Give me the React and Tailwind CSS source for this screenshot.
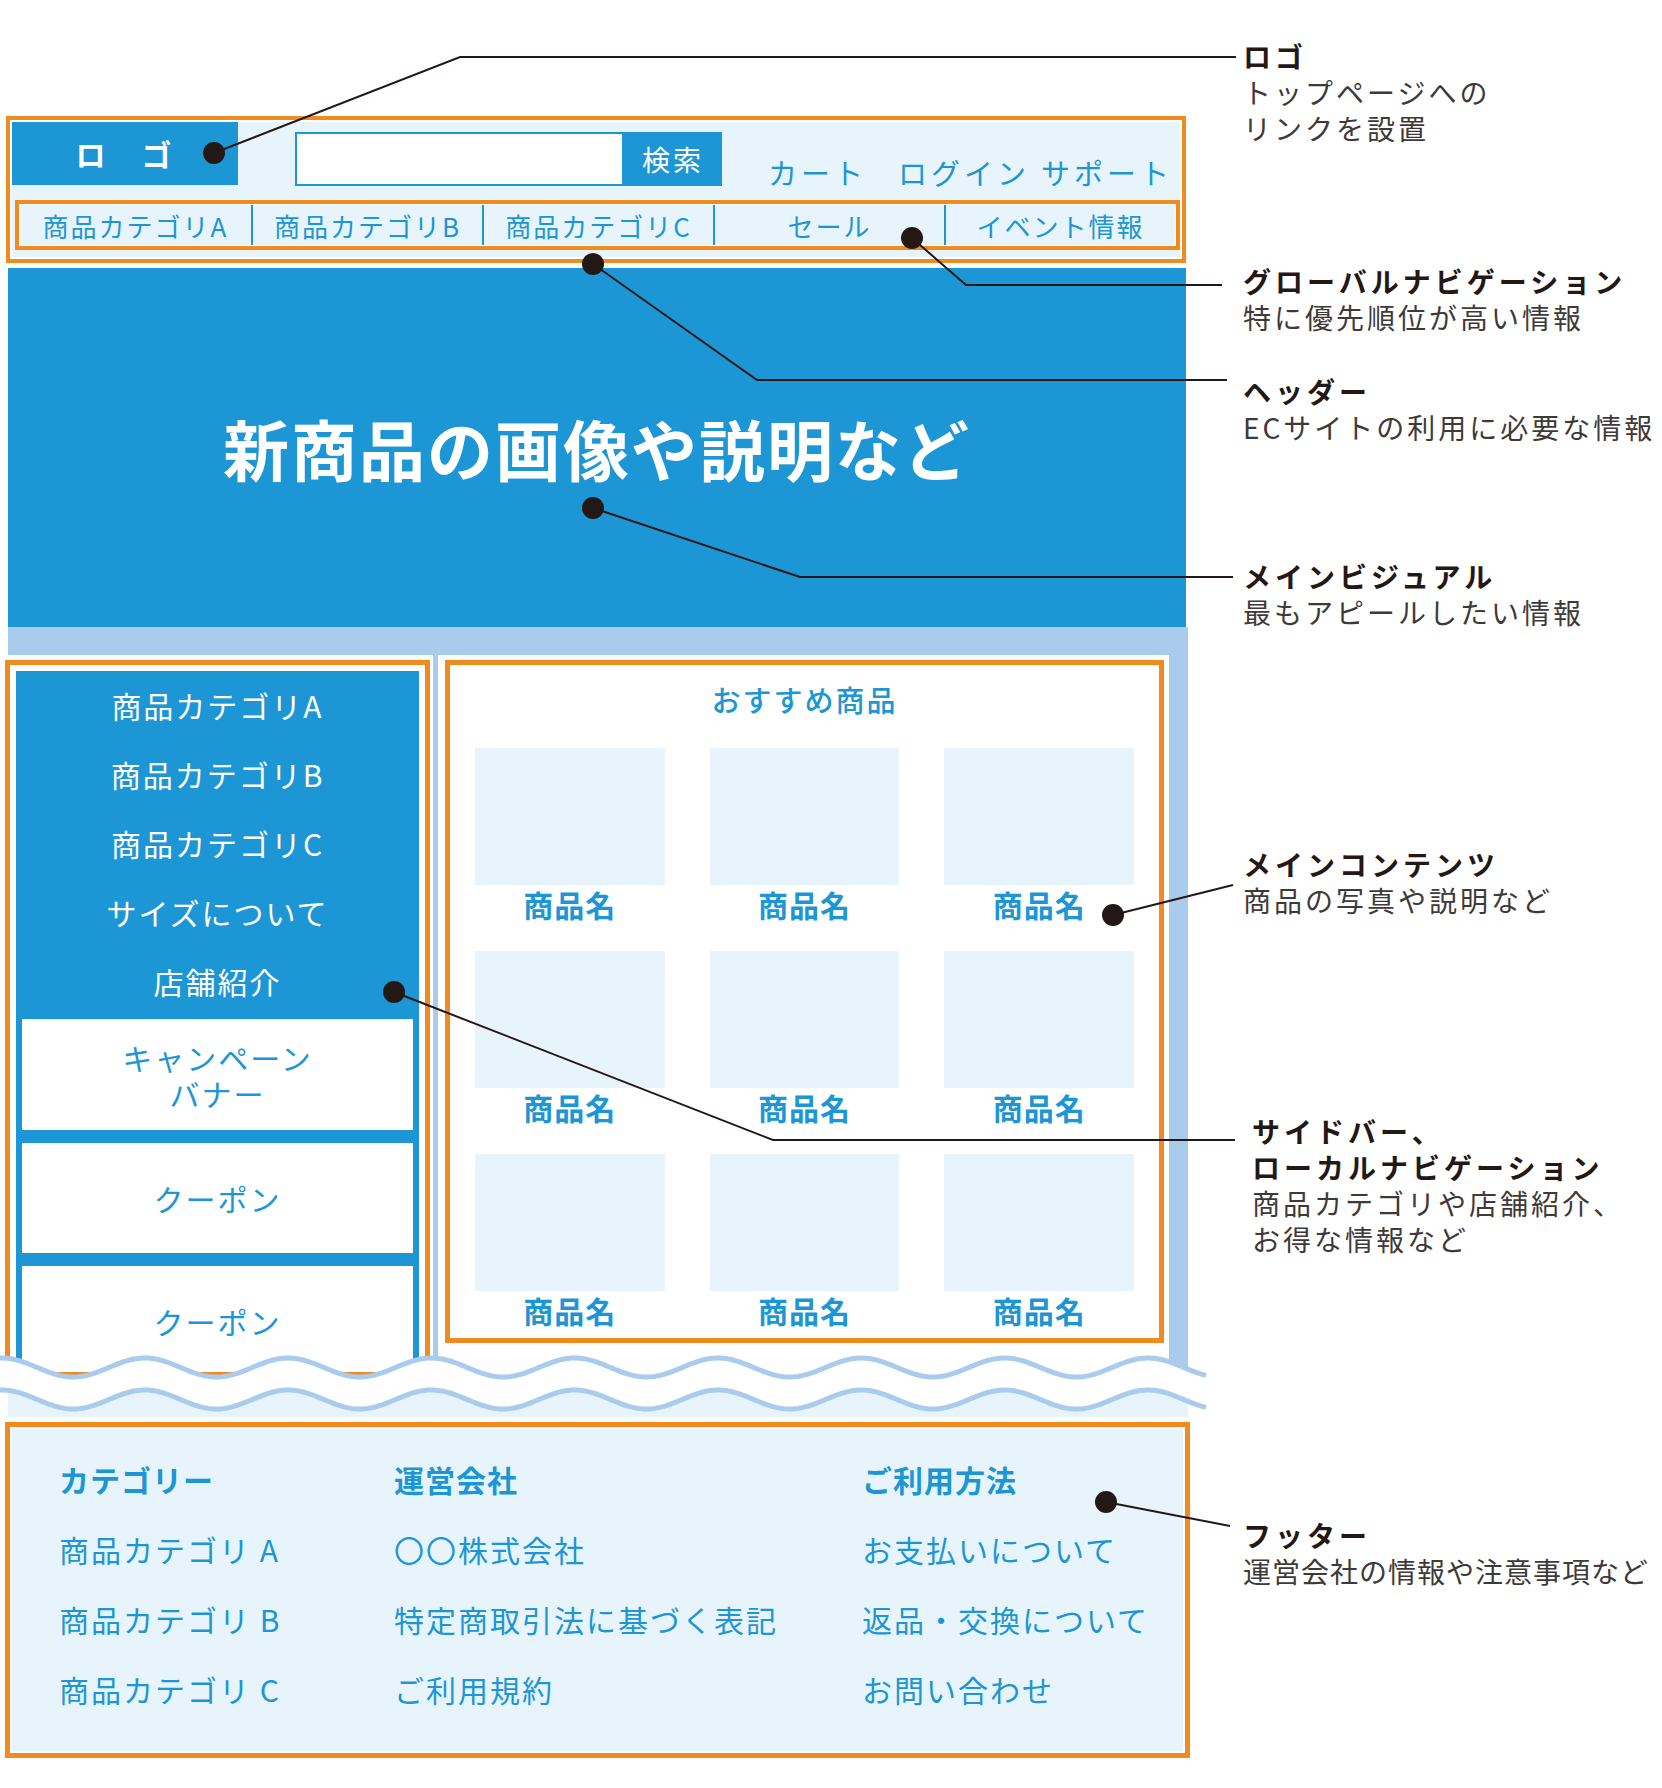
import React from 'react'

const navItems = ['商品カテゴリA', '商品カテゴリB', '商品カテゴリC', 'セール', 'イベント情報']
const sideItems = ['商品カテゴリA', '商品カテゴリB', '商品カテゴリC', 'サイズについて', '店舗紹介']

// builds a cosine wave polyline for the torn edge
function wavePoints(y0, x0, x1) {
    const period = 143.3
    const phase = 1.5
    const amp = 9.5
    let d = ''
    for (let x = x0; x <= x1; x += 2) {
        const y = y0 - amp * Math.cos((2 * Math.PI * (x - phase)) / period)
        d += (x === x0 ? 'M' : 'L') + x + ' ' + y.toFixed(2) + ' '
    }
    const yEnd = y0 - amp * Math.cos((2 * Math.PI * (x1 - phase)) / period)
    d += 'L' + x1 + ' ' + yEnd.toFixed(2) + ' '
    return d
}

function Header() {
    return (
        <div className="mt-[116px] ml-[6px] w-[1180px] h-[147px] border-4 border-[#f08c1f] bg-white p-[2px]">
            <div className="h-full bg-[#e8f4fc] flex flex-col">
                <div className="flex items-start h-[63px]">
                    <div className="w-[226px] h-[63px] bg-[#1c96d4] flex items-center justify-center text-white font-bold text-[30px] tracking-[3px]">
                        ロ　ゴ
                    </div>
                    <div className="ml-[57px] mt-[10px] flex">
                        <div className="w-[329px] h-[54px] border-2 border-[#1c96d4] bg-white" />
                        <div className="w-[98px] h-[54px] bg-[#1c96d4] text-white text-[28px] tracking-[3px] flex items-center justify-center">
                            検索
                        </div>
                    </div>
                    <div className="flex mt-[32px] text-[29px] leading-[36px] tracking-[4px] text-[#1c96d4] whitespace-nowrap">
                        <span className="ml-[46px]">カート</span>
                        <span className="ml-[31px]">ログイン</span>
                        <span className="ml-[11px]">サポート</span>
                    </div>
                </div>
                <div className="mt-[15px] ml-[3px] w-[1165px] h-[50px] shrink-0 border-4 border-[#f08c1f] bg-white p-px">
                    <div className="h-full grid grid-cols-5 bg-[#e8f4fc] text-[#1c96d4] text-[26px] tracking-[2px]">
                        {navItems.map((t, i) => (
                            <div
                                key={t}
                                className={i > 0 ? 'flex items-center justify-center border-l-2 border-[#1c96d4]' : 'flex items-center justify-center'}
                            >
                                {t}
                            </div>
                        ))}
                    </div>
                </div>
            </div>
        </div>
    )
}

function Sidebar() {
    return (
        <div className="ml-[5px] mt-[5px] w-[425px] h-[717px] shrink-0 border-[5px] border-[#f08c1f] bg-white p-[6px] flex flex-col">
            <div className="flex-1 overflow-hidden bg-[#1c96d4] flex flex-col">
                {sideItems.map(t => (
                    <div key={t} className="h-[69px] shrink-0 flex items-center justify-center text-white text-[30px] tracking-[2px]">
                        {t}
                    </div>
                ))}
                <div className="px-[6px] mt-[3px] flex flex-col gap-[13px] text-[#1c96d4] text-[30px] leading-[36px] tracking-[2px]">
                    <div className="h-[111px] shrink-0 bg-white flex flex-col items-center justify-center">
                        <span>キャンペーン</span>
                        <span>バナー</span>
                    </div>
                    <div className="h-[110px] shrink-0 bg-white flex items-center justify-center">クーポン</div>
                    <div className="h-[110px] shrink-0 bg-white flex items-center justify-center">クーポン</div>
                </div>
            </div>
        </div>
    )
}

function MainContents() {
    const products = Array.from({ length: 9 }, (_, i) => i)
    return (
        <div className="ml-[3px] w-[755px] h-[725px] shrink-0 bg-[#a9cbec] pl-[5px] pr-[19px]">
            <div className="h-full bg-white pt-[5px] pl-[7px] pr-[5px]">
                <div className="w-[719px] h-[683px] border-[5px] border-[#f08c1f] pt-[16px] px-[25px]">
                    <div className="text-center text-[29px] leading-[36px] tracking-[2px] font-medium text-[#1c96d4]">
                        おすすめ商品
                    </div>
                    <div className="mt-[31px] grid grid-cols-3 gap-x-[45px] gap-y-[29px]">
                        {products.map(i => (
                            <div key={i}>
                                <div className="h-[137px] bg-[#e8f4fc]" />
                                <div className="mt-[1px] text-center text-[30px] leading-[36px] font-bold tracking-[1px] text-[#1c96d4]">
                                    商品名
                                </div>
                            </div>
                        ))}
                    </div>
                </div>
            </div>
        </div>
    )
}

function Wave() {
    const w1 = wavePoints(22.5, 0, 1206)
    const w2 = wavePoints(54.5, 0, 1206)
    const w2fill = wavePoints(54.5, 8, 1188)
    return (
        <svg className="absolute left-0 top-[718px]" width="1210" height="75" viewBox="0 0 1210 75">
            <path d={w1 + 'L1210 20 L1210 75 L0 75 Z'} fill="#ffffff" />
            <path d={w2fill + 'L1188 72 L8 72 Z'} fill="#e8f4fc" />
            <path d={w1} stroke="#a9cbec" strokeWidth="5" fill="none" />
            <path d={w2} stroke="#a9cbec" strokeWidth="5" fill="none" />
        </svg>
    )
}

function Footer() {
    const cols = [
        { title: 'カテゴリー', items: ['商品カテゴリ A', '商品カテゴリ B', '商品カテゴリ C'] },
        { title: '運営会社', items: ['〇〇株式会社', '特定商取引法に基づく表記', 'ご利用規約'] },
        { title: 'ご利用方法', items: ['お支払いについて', '返品・交換について', 'お問い合わせ'] },
    ]
    return (
        <div className="mt-[42px] ml-[5px] w-[1185px] border-[5px] border-[#f08c1f] bg-white p-[2px]">
            <div className="bg-[#e8f4fc] pt-[15px] pb-[27px] pl-[47px] grid grid-cols-[335px_468px_1fr] text-[#1c96d4] text-[30px] leading-[70px] tracking-[2px]">
                {cols.map(c => (
                    <div key={c.title} className="flex flex-col whitespace-nowrap">
                        <div className="font-bold tracking-[1px]">{c.title}</div>
                        {c.items.map(t => (
                            <div key={t}>{t}</div>
                        ))}
                    </div>
                ))}
            </div>
        </div>
    )
}

function Note({ className, title, desc, descClass }) {
    return (
        <div className={className}>
            {title.map(t => (
                <div key={t} className="font-bold text-[#231815] whitespace-nowrap tracking-[4px]">{t}</div>
            ))}
            {desc.map(t => (
                <div key={t} className={descClass || 'text-[#3e3a39] whitespace-nowrap'}>{t}</div>
            ))}
        </div>
    )
}

function Annotations() {
    return (
        <div className="flex flex-col text-[28px] leading-[36px] tracking-[3px]">
            <Note className="mt-[38px]" title={['ロゴ']} desc={['トップページへの', 'リンクを設置']} />
            <Note className="mt-[117px]" title={['グローバルナビゲーション']} desc={['特に優先順位が高い情報']} />
            <Note className="mt-[38px]" title={['ヘッダー']} desc={['ECサイトの利用に必要な情報']} />
            <Note className="mt-[113px]" title={['メインビジュアル']} desc={['最もアピールしたい情報']} />
            <Note className="mt-[216px]" title={['メインコンテンツ']} desc={['商品の写真や説明など']} />
            <Note
                className="mt-[195px] ml-[9px]"
                title={['サイドバー、', 'ローカルナビゲーション']}
                desc={['商品カテゴリや店舗紹介、', 'お得な情報など']}
            />
            <Note
                className="mt-[260px]"
                title={['フッター']}
                desc={['運営会社の情報や注意事項など']}
                descClass="text-[#3e3a39] whitespace-nowrap tracking-[1px]"
            />
        </div>
    )
}

function Leaders() {
    const dots = [
        [214, 153], [912, 238], [593, 264], [593, 508], [1113, 915], [394, 992], [1106, 1502],
    ]
    return (
        <svg className="absolute inset-0 pointer-events-none" width="1662" height="1788" viewBox="0 0 1662 1788">
            <g stroke="#231815" strokeWidth="2" fill="none">
                <polyline points="214,153 460,57 1236,57" />
                <polyline points="912,238 966,285 1222,285" />
                <polyline points="593,264 757,380 1227,380" />
                <polyline points="593,508 800,577 1233,577" />
                <polyline points="1113,915 1233,885" />
                <polyline points="394,992 773,1140 1235,1140" />
                <polyline points="1106,1502 1230,1526" />
            </g>
            <g fill="#231815">
                {dots.map(([x, y]) => (
                    <circle key={x + '-' + y} cx={x} cy={y} r="11" />
                ))}
            </g>
        </svg>
    )
}

export default function App() {
    return (
        <div className="relative w-[1662px] h-[1788px] overflow-hidden bg-white font-['Noto_Sans_CJK_JP','Noto_Sans',sans-serif]">
            <div className="flex">
                <div className="w-[1243px] shrink-0 flex flex-col">
                    <Header />
                    <div className="mt-[5px] ml-[8px] w-[1178px] h-[359px] bg-[#1c96d4] flex items-center justify-center text-white font-bold text-[66px] tracking-[2px]">
                        新商品の画像や説明など
                    </div>
                    <div className="relative h-[753px]">
                        <div className="h-full overflow-hidden">
                            <div className="ml-[8px] w-[1180px] h-[28px] bg-[#a9cbec]" />
                            <div className="flex items-start">
                                <Sidebar />
                                <MainContents />
                            </div>
                        </div>
                        <Wave />
                    </div>
                    <Footer />
                </div>
                <Annotations />
            </div>
            <Leaders />
        </div>
    )
}
